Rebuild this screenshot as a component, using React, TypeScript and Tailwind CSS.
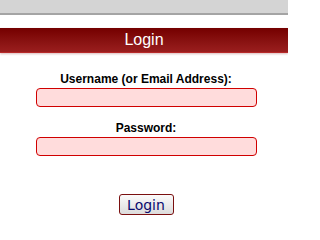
import { useState } from 'react';

export default function App() {
  const [username, setUsername] = useState('');
  const [password, setPassword] = useState('');

  return (
    <div className="h-[229px] w-[288px] overflow-hidden bg-white font-['Liberation_Sans',Arial,sans-serif]">
      <div className="h-[15px] border-b-2 border-[#a4a4a4] bg-[#d4d4d4]" />
      <div className="mt-[13px] flex h-[25px] items-center justify-center border-b border-[#b82a2a] bg-gradient-to-b from-[#740000] to-[#9a1e1e] shadow-[0_1px_2px_rgba(150,60,60,0.35)]">
        <h2 className="text-[16px] leading-none text-white">Login</h2>
      </div>
      <form
        className="flex flex-col items-center pl-[4px] pt-[19px]"
        onSubmit={(event) => event.preventDefault()}
      >
        <label htmlFor="username" className="text-[12px] font-bold leading-[14px] text-black">
          Username (or Email Address):
        </label>
        <input
          id="username"
          value={username}
          onChange={(event) => setUsername(event.target.value)}
          className="mt-[2px] h-[19px] w-[221px] rounded-[4px] border border-[#d00000] bg-[#ffdcdc] px-1 text-[12px] outline-none"
        />
        <label
          htmlFor="password"
          className="mt-[14px] text-[12px] font-bold leading-[14px] text-black"
        >
          Password:
        </label>
        <input
          id="password"
          type="password"
          value={password}
          onChange={(event) => setPassword(event.target.value)}
          className="mt-[2px] h-[19px] w-[221px] rounded-[4px] border border-[#d00000] bg-[#ffdcdc] px-1 text-[12px] outline-none"
        />
        <button
          type="submit"
          className="mt-[38px] flex h-[21px] w-[55px] items-center justify-center rounded-[3px] border border-[#7a1010] bg-gradient-to-b from-[#fbfbfb] to-[#dcdcdc] font-['DejaVu_Sans',Verdana,sans-serif] text-[14px] leading-none text-[#0a0a6e]"
        >
          Login
        </button>
      </form>
    </div>
  );
}
